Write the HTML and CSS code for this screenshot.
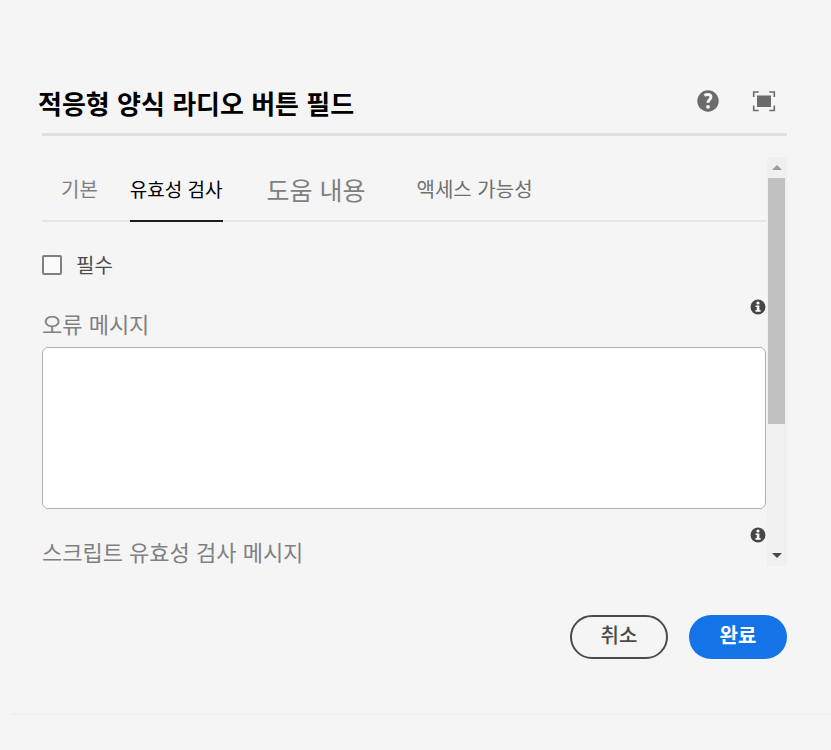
FILE: index.html
```html
<!DOCTYPE html>
<html lang="ko">
<head>
<meta charset="utf-8">
<meta name="viewport" content="width=device-width, initial-scale=1">
<title>적응형 양식 라디오 버튼 필드</title>
<link rel="stylesheet" href="styles.css">
</head>
<body>
<main class="dialog">
  <header class="dialog-header">
    <h1 class="title">적응형 양식 라디오 버튼 필드</h1>
    <div class="tools">
      <button class="icon-button" type="button" aria-label="도움말">
        <svg width="22" height="22" viewBox="0 0 22 22">
          <circle cx="11" cy="11" r="10.7" fill="#6b6b6b"/>
          <path d="M7.400 5.500C8.700 4.700 9.700 4.500 10.900 4.500c1.900 0 3 .9 3 2.500 0 2.400-2.900 2.600-2.900 5.800" fill="none" stroke="#f5f5f5" stroke-width="3"/>
          <circle cx="11" cy="16.800" r="1.900" fill="#f5f5f5"/>
        </svg>
      </button>
      <button class="icon-button" type="button" aria-label="전체 화면">
        <svg width="24" height="22" viewBox="0 0 24 22">
          <rect x="5" y="5.500" width="14" height="11.500" fill="#6b6b6b"/>
          <path d="M1.700 7V2h5M17.300 2h5v5M22.300 15.500v5h-5M6.700 20.500h-5v-5" fill="none" stroke="#6b6b6b" stroke-width="1.600"/>
        </svg>
      </button>
    </div>
  </header>

  <div class="viewport">
    <div class="content">
      <nav class="tabs" role="tablist">
        <button class="tab" type="button" role="tab" aria-selected="false">기본</button>
        <button class="tab tab-active" type="button" role="tab" aria-selected="true">유효성 검사</button>
        <button class="tab tab-large" type="button" role="tab" aria-selected="false">도움 내용</button>
        <button class="tab tab-dark" type="button" role="tab" aria-selected="false">액세스 가능성</button>
      </nav>
      <label class="check"><input class="check-box" type="checkbox">필수</label>
      <div class="field-head">
        <label class="field-label" for="error-message">오류 메시지</label>
        <svg class="info" width="16" height="16" viewBox="0 0 16 16" aria-hidden="true">
          <circle cx="8" cy="8" r="7.500" fill="#464646"/>
          <circle cx="8" cy="4" r="1.600" fill="#fff"/>
          <path d="M5.600 6.400h3.800v4.700h1.200v1.600H5.500v-1.600h1.300V8H5.600z" fill="#fff"/>
        </svg>
      </div>
      <textarea class="message" id="error-message"></textarea>
      <div class="field-head">
        <span class="field-label">스크립트 유효성 검사 메시지</span>
        <svg class="info" width="16" height="16" viewBox="0 0 16 16" aria-hidden="true">
          <circle cx="8" cy="8" r="7.500" fill="#464646"/>
          <circle cx="8" cy="4" r="1.600" fill="#fff"/>
          <path d="M5.600 6.400h3.800v4.700h1.200v1.600H5.500v-1.600h1.300V8H5.600z" fill="#fff"/>
        </svg>
      </div>
    </div>
    <div class="scrollbar" aria-hidden="true">
      <svg class="arrow" width="20" height="21" viewBox="0 0 20 21"><path d="M5 13l5-5 5 5z" fill="#9b9b9b"/></svg>
      <div class="track"><div class="thumb"></div></div>
      <svg class="arrow" width="20" height="21" viewBox="0 0 20 21"><path d="M5 8l5 5 5-5z" fill="#484848"/></svg>
    </div>
  </div>

  <footer class="actions">
    <button class="button button-outline" type="button">취소</button>
    <button class="button button-primary" type="button">완료</button>
  </footer>
</main>
<hr class="page-rule">
</body>
</html>
```
FILE: styles.css
```css
* {
  box-sizing: border-box;
}

body {
  margin: 0;
  background: #f5f5f5;
  font-family: "Noto Sans CJK KR", sans-serif;
  font-size: 20px;
  line-height: 32px;
  color: #4b4b4b;
}

button {
  font: inherit;
  border: 0;
  background: none;
  cursor: pointer;
}

svg {
  display: block;
}

.dialog {
  padding: 72px 44px 0 42px;
}

.dialog-header {
  display: flex;
  justify-content: space-between;
  align-items: center;
  height: 64px;
  padding-right: 11px;
  border-bottom: 3px solid #e0e0e0;
}

.title {
  margin: 0 0 0 -4px;
  font-size: 26px;
  font-weight: 700;
  line-height: 40px;
  color: #000;
}

.tools {
  display: flex;
  align-items: center;
  gap: 33px;
  padding-bottom: 4px;
}

.icon-button {
  padding: 0;
}

.viewport {
  display: flex;
  height: 409px;
  margin-top: 21px;
  overflow: hidden;
}

.content {
  flex: 1;
  min-width: 0;
  padding-right: 1px;
}

.tabs {
  display: flex;
  height: 65px;
  padding-left: 19px;
  border-bottom: 2px solid #e6e6e6;
}

.tab {
  height: 65px;
  margin-right: 32px;
  padding: 0;
  border-bottom: 2px solid transparent;
  color: #808080;
}

.tab-active {
  margin-right: 44px;
  border-bottom-color: #1c1c1c;
  font-size: 19px;
  color: #000;
}

.tab-large {
  margin-right: 51px;
  font-size: 25px;
}

.tab-dark {
  color: #707070;
}

.check {
  display: flex;
  align-items: center;
  gap: 14px;
  width: max-content;
  margin-top: 27px;
}

.check-box {
  appearance: none;
  width: 20px;
  height: 20px;
  margin: 0;
  border: 2px solid #808080;
  border-radius: 2px;
  background: #fafafa;
}

.field-head {
  display: flex;
  justify-content: space-between;
  height: 48px;
  margin-top: 18px;
}

.field-label {
  align-self: flex-end;
  margin-bottom: 10px;
  font-size: 22px;
  line-height: 28px;
  color: #808080;
}

.info {
  flex: none;
}

.message {
  display: block;
  width: 100%;
  height: 162px;
  padding: 12px;
  border: 1px solid #b0b0b0;
  border-radius: 6px;
  background: #fff;
  font: inherit;
  resize: none;
}

.scrollbar {
  display: flex;
  flex: none;
  flex-direction: column;
  width: 20px;
  background: #f0f0f0;
}

.arrow {
  flex: none;
}

.track {
  flex: 1;
  padding: 0 2px 0 1px;
}

.thumb {
  height: 67%;
  background: #c1c1c1;
}

.actions {
  display: flex;
  justify-content: flex-end;
  gap: 21px;
  margin-top: 49px;
}

.button {
  width: 98px;
  height: 44px;
  padding: 0 0 4px;
  border-radius: 22px;
  font-weight: 500;
}

.button-outline {
  border: 2px solid #4b4b4b;
  color: #4b4b4b;
}

.button-primary {
  background: #1473e6;
  font-weight: 700;
  color: #fff;
}

.page-rule {
  margin: 54px 0 0 12px;
  border: 0;
  border-top: 2px solid #f0f0f0;
}
```
